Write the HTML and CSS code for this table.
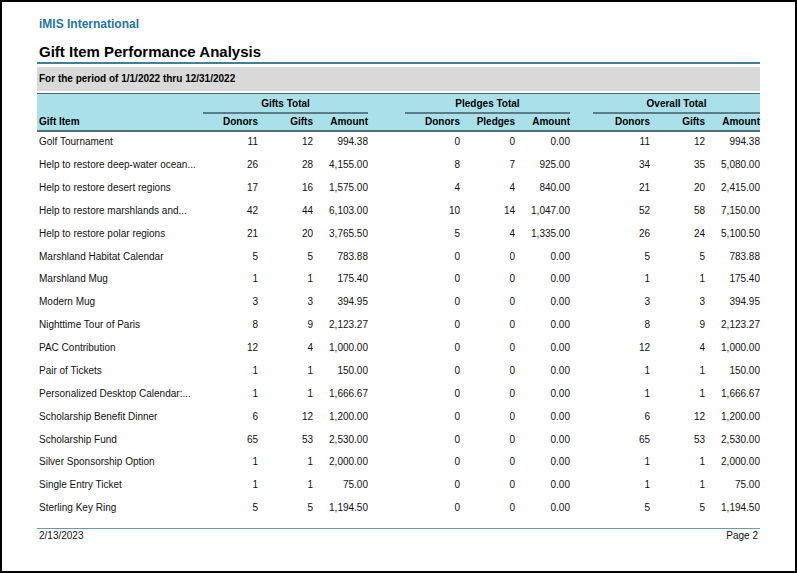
FILE: index.html
```html
<!DOCTYPE html>
<html lang="en">
<head>
<meta charset="utf-8">
<title>Gift Item Performance Analysis</title>
<link rel="stylesheet" href="styles.css">
</head>
<body>
<div class="page">
  <div class="org">iMIS International</div>
  <h1 class="title">Gift Item Performance Analysis</h1>
  <div class="period">For the period of 1/1/2022 thru 12/31/2022</div>

  <div class="thead">
    <div class="blank"></div>
    <div class="group g1">Gifts Total</div>
    <div class="blank"></div>
    <div class="group g2">Pledges Total</div>
    <div class="blank"></div>
    <div class="group g3">Overall Total</div>

    <div class="ch first">Gift Item</div>
    <div class="ch">Donors</div>
    <div class="ch">Gifts</div>
    <div class="ch">Amount</div>
    <div class="ch"></div>
    <div class="ch">Donors</div>
    <div class="ch">Pledges</div>
    <div class="ch">Amount</div>
    <div class="ch"></div>
    <div class="ch">Donors</div>
    <div class="ch">Gifts</div>
    <div class="ch">Amount</div>
  </div>

  <div class="tbody" id="tbody"></div>

  <div class="footer">
    <span>2/13/2023</span>
    <span>Page 2</span>
  </div>
</div>
<script src="app.js"></script>
</body>
</html>
```

FILE: app.js
```js
const rows = [
  ["Golf Tournament", 11, 12, "994.38", 0, 0, "0.00", 11, 12, "994.38"],
  ["Help to restore deep-water ocean...", 26, 28, "4,155.00", 8, 7, "925.00", 34, 35, "5,080.00"],
  ["Help to restore desert regions", 17, 16, "1,575.00", 4, 4, "840.00", 21, 20, "2,415.00"],
  ["Help to restore marshlands and...", 42, 44, "6,103.00", 10, 14, "1,047.00", 52, 58, "7,150.00"],
  ["Help to restore polar regions", 21, 20, "3,765.50", 5, 4, "1,335.00", 26, 24, "5,100.50"],
  ["Marshland Habitat Calendar", 5, 5, "783.88", 0, 0, "0.00", 5, 5, "783.88"],
  ["Marshland Mug", 1, 1, "175.40", 0, 0, "0.00", 1, 1, "175.40"],
  ["Modern Mug", 3, 3, "394.95", 0, 0, "0.00", 3, 3, "394.95"],
  ["Nighttime Tour of Paris", 8, 9, "2,123.27", 0, 0, "0.00", 8, 9, "2,123.27"],
  ["PAC Contribution", 12, 4, "1,000.00", 0, 0, "0.00", 12, 4, "1,000.00"],
  ["Pair of Tickets", 1, 1, "150.00", 0, 0, "0.00", 1, 1, "150.00"],
  ["Personalized Desktop Calendar:...", 1, 1, "1,666.67", 0, 0, "0.00", 1, 1, "1,666.67"],
  ["Scholarship Benefit Dinner", 6, 12, "1,200.00", 0, 0, "0.00", 6, 12, "1,200.00"],
  ["Scholarship Fund", 65, 53, "2,530.00", 0, 0, "0.00", 65, 53, "2,530.00"],
  ["Silver Sponsorship Option", 1, 1, "2,000.00", 0, 0, "0.00", 1, 1, "2,000.00"],
  ["Single Entry Ticket", 1, 1, "75.00", 0, 0, "0.00", 1, 1, "75.00"],
  ["Sterling Key Ring", 5, 5, "1,194.50", 0, 0, "0.00", 5, 5, "1,194.50"]
];
const tbody = document.getElementById("tbody");
rows.forEach(r => {
  const row = document.createElement("div");
  row.className = "row";
  const cells = [r[0], r[1], r[2], r[3], "", r[4], r[5], r[6], "", r[7], r[8], r[9]];
  cells.forEach((c, i) => {
    const d = document.createElement("div");
    d.className = i === 0 ? "cell name" : "cell num";
    d.textContent = c;
    row.appendChild(d);
  });
  tbody.appendChild(row);
});
```

FILE: styles.css
```css
* { box-sizing: border-box; }
html, body { margin: 0; padding: 0; background: #fff; }
body {
  font-family: "Liberation Sans", Arial, sans-serif;
  color: #111;
}
.page {
  width: 797px;
  height: 573px;
  border: 2px solid #000;
  padding: 15px 35px 0 35px;
  overflow: hidden;
}
.org {
  font-size: 12px;
  line-height: 14px;
  font-weight: bold;
  color: #2475a6;
  padding-left: 2px;
}
.title {
  margin: 12px 0 0 0;
  font-size: 15px;
  line-height: 18px;
  font-weight: bold;
  color: #000;
  padding: 0 0 1px 2px;
  border-bottom: 2px solid #3f7f9a;
}
.period {
  margin-top: 3px;
  height: 24px;
  line-height: 24px;
  background: #d9d9d9;
  font-size: 10px;
  font-weight: bold;
  padding-left: 2px;
  color: #000;
}
.thead, .row {
  display: grid;
  grid-template-columns: 166px 55px 55px 55px 37px 55px 55px 55px 23px 57px 55px 55px;
}
.thead {
  margin-top: 2px;
  background: #a9e0e9;
  border-top: 1px solid #4d6b75;
  border-bottom: 2px solid #4f6e78;
  font-size: 10px;
  font-weight: bold;
  color: #000;
}
.group {
  text-align: center;
  padding-top: 2px;
  line-height: 16px;
  border-bottom: 2px solid #5b7c86;
}
.g1 { grid-column: 2 / 5; }
.g2 { grid-column: 6 / 9; }
.g3 { grid-column: 10 / 13; }
.ch {
  line-height: 16px;
  text-align: right;
  white-space: nowrap;
}
.ch.first { text-align: left; padding-left: 2px; }
.tbody { padding-top: 0.8px; }
.row {
  height: 22.875px;
  padding-top: 3.4px;
  font-size: 10px;
  line-height: 12px;
  color: #111;
}
.cell { white-space: nowrap; overflow: hidden; }
.name { padding-left: 2px; }
.num { text-align: right; }
.footer {
  margin-top: 6.2px;
  border-top: 1px solid #6a9ab2;
  padding: 1px 2px 0 2px;
  display: flex;
  justify-content: space-between;
  font-size: 10px;
  line-height: 12px;
  color: #111;
}
```
